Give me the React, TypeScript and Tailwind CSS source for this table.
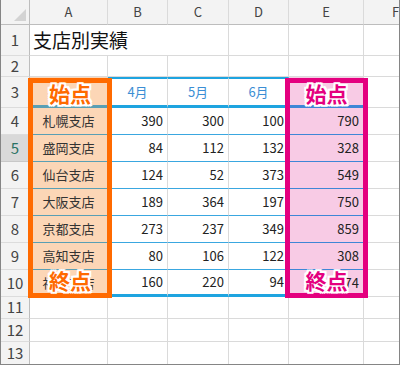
import React from 'react';

const font = "font-['Noto_Sans_CJK_JP','Noto_Sans',sans-serif]";

const cols = ['A', 'B', 'C', 'D', 'E', 'F'];

const rows: (string | number)[][] = [
  ['札幌支店', 390, 300, 100, 790],
  ['盛岡支店', 84, 112, 132, 328],
  ['仙台支店', 124, 52, 373, 549],
  ['大阪支店', 189, 364, 197, 750],
  ['京都支店', 273, 237, 349, 859],
  ['高知支店', 80, 106, 122, 308],
  ['福岡支店', 160, 220, 94, 874],
];

const outline =
  '[text-shadow:2px_0_0_#fff,-2px_0_0_#fff,0_2px_0_#fff,0_-2px_0_#fff,2px_2px_0_#fff,-2px_-2px_0_#fff,2px_-2px_0_#fff,-2px_2px_0_#fff,0_0_3px_#fff]';

function RowHeader({ n }: { n: number }) {
  const active = n === 5;
  return (
    <div
      className={
        active
          ? 'flex items-center justify-center bg-[#d9d9d9] border-r border-r-[#9c9c9c] border-b border-b-[#c8c8c8] text-[15px] text-[#2a7264]'
          : 'flex items-center justify-center bg-[#f3f3f3] border-r border-r-[#bdbdbd] border-b border-b-[#dcdcdc] text-[15px] text-[#444]'
      }
    >
      {n}
    </div>
  );
}

function Blank() {
  return <div className="border-r border-b border-[#dadada]" />;
}

function DataRow({ r, i }: { r: (string | number)[]; i: number }) {
  const last = i === rows.length - 1;
  return (
    <>
      <RowHeader n={i + 4} />
      <div className="flex items-center justify-center bg-[#fcd6b6] border-r border-r-[#dadada] border-b border-b-[#5a9fb4] text-[13px] text-[#333]">
        {r[0]}
      </div>
      {[1, 2, 3].map((c) => (
        <div
          key={c}
          className={
            last
              ? 'flex items-center justify-end pr-[4px] border-r border-r-[#dadada] border-b-[3px] border-b-[#1ea4e0] text-[13px] text-[#222]'
              : 'flex items-center justify-end pr-[4px] border-r border-r-[#dadada] border-b border-b-[#3aa7e0] text-[13px] text-[#222]'
          }
        >
          {r[c]}
        </div>
      ))}
      <div className="flex items-center justify-end pr-[4px] bg-[#f8cbe5] border-r border-r-[#dadada] border-b border-b-[#3f86d6] text-[13px] text-[#222]">
        {r[4]}
      </div>
      <Blank />
    </>
  );
}

export default function App() {
  return (
    <div className={`relative w-[400px] h-[365px] overflow-hidden bg-white border-l border-r border-b border-[#858585] ${font}`}>
      <div className="grid w-max grid-cols-[29px_78px_60px_61px_60px_75px_64px] grid-rows-[25px_31px_21px_31px_repeat(7,27px)_22px_23px_23px]">
        {/* column headers */}
        <div className="relative bg-[#f3f3f3] border-r border-r-[#bdbdbd] border-b border-b-[#bdbdbd]">
          <svg className="absolute right-[3px] bottom-[3px]" width="12" height="12" viewBox="0 0 12 12">
            <polygon points="12,0 12,12 0,12" fill="#d3d3d3" />
          </svg>
        </div>
        {cols.map((c) => (
          <div
            key={c}
            className="flex items-center justify-center bg-[#f3f3f3] border-r border-r-[#dadada] border-b border-b-[#bdbdbd] text-[13px] text-[#444]"
          >
            {c}
          </div>
        ))}

        {/* row 1 */}
        <RowHeader n={1} />
        <div className="flex items-center pl-[3px] border-b border-[#dadada] text-[19px] text-[#111] whitespace-nowrap col-span-2">
          支店別実績
        </div>
        <Blank />
        <Blank />
        <Blank />
        <Blank />

        {/* row 2 */}
        <RowHeader n={2} />
        {cols.map((c) => (
          <Blank key={c} />
        ))}

        {/* row 3 */}
        <RowHeader n={3} />
        <div className="bg-[#fcd6b6] border-r border-r-[#dadada] border-b-[3px] border-b-[#5a9fb4]" />
        {['4月', '5月', '6月'].map((m) => (
          <div
            key={m}
            className="flex items-center justify-center border-r border-r-[#dadada] border-t-2 border-t-[#1ea4e0] border-b-[3px] border-b-[#1ea4e0] text-[13px] text-[#3b8ed4]"
          >
            {m}
          </div>
        ))}
        <div className="bg-[#f8cbe5] border-r border-r-[#dadada] border-b-[3px] border-b-[#3f86d6]" />
        <Blank />

        {rows.map((r, i) => (
          <DataRow key={i} r={r} i={i} />
        ))}

        {[11, 12, 13].map((n) => (
          <React.Fragment key={n}>
            <RowHeader n={n} />
            {cols.map((c) => (
              <Blank key={c} />
            ))}
          </React.Fragment>
        ))}
      </div>

      {/* frames */}
      <div className="absolute left-[27px] top-[78px] w-[84px] h-[220px] border-[5px] border-[#ff6a00]" />
      <div className="absolute left-[284px] top-[78px] w-[83px] h-[220px] border-[5px] border-[#e4007f]" />

      {/* labels */}
      <div className={`absolute left-[27px] top-[80px] w-[84px] h-[26px] leading-[26px] text-center text-[21px] font-bold text-[#ff6a00] ${outline}`}>
        始点
      </div>
      <div className={`absolute left-[27px] top-[267px] w-[84px] h-[26px] leading-[26px] text-center text-[21px] font-bold text-[#ff6a00] ${outline}`}>
        終点
      </div>
      <div className={`absolute left-[284px] top-[80px] w-[83px] h-[26px] leading-[26px] text-center text-[21px] font-bold text-[#e4007f] ${outline}`}>
        始点
      </div>
      <div className={`absolute left-[284px] top-[267px] w-[83px] h-[26px] leading-[26px] text-center text-[21px] font-bold text-[#e4007f] ${outline}`}>
        終点
      </div>
    </div>
  );
}
